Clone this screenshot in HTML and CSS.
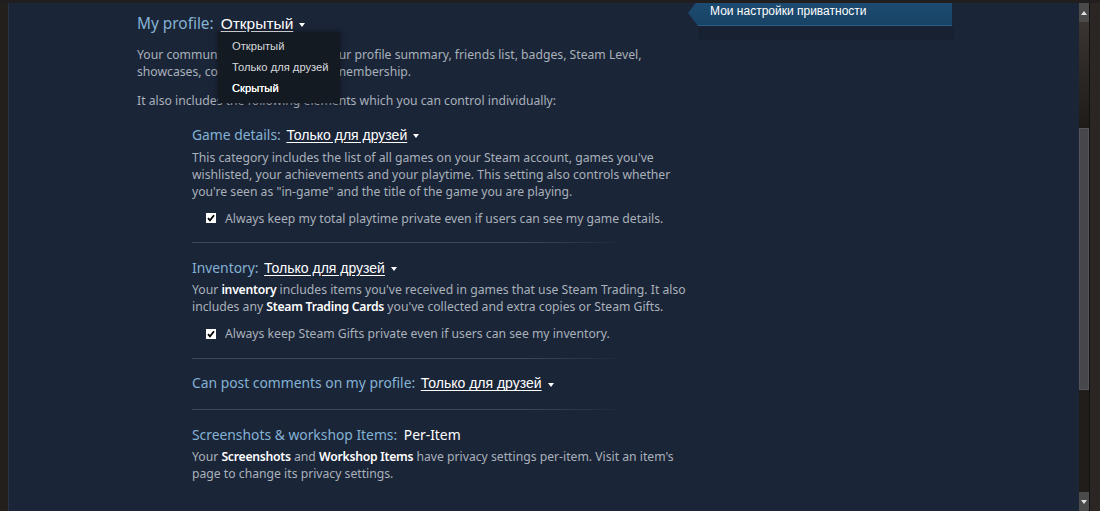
FILE: index.html
```html
<!DOCTYPE html>
<html lang="en">
<head>
<meta charset="utf-8">
<link rel="stylesheet" href="styles.css">
<title>Privacy</title>
</head>
<body>
<div class="window">
  <div class="edge-left"></div>
  <div class="main">
    <div class="content">
      <div class="top">
        <div class="heading top-heading">My profile: <span class="choice">Открытый</span><span class="caret"></span></div>
        <div class="menu">
          <div class="menu-item">Открытый</div>
          <div class="menu-item">Только для друзей</div>
          <div class="menu-item active">Скрытый</div>
        </div>
        <p class="desc top-desc">Your community profile includes your profile summary, friends list, badges, Steam Level, showcases, comments, and group membership.</p>
        <p class="desc also">It also includes the following elements which you can control individually:</p>
      </div>
      <div class="sections">
        <div class="section">
          <div class="heading">Game details: <span class="choice">Только для друзей</span><span class="caret"></span></div>
          <p class="desc">This category includes the list of all games on your Steam account, games you've wishlisted, your achievements and your playtime. This setting also controls whether you're seen as "in-game" and the title of the game you are playing.</p>
          <label class="check"><span class="box"><svg width="8" height="8" viewBox="0 0 8 8"><path d="M1 4.2 L3 6.3 L7 1.3" fill="none" stroke="#000" stroke-width="1.8"/></svg></span><span>Always keep my total playtime private even if users can see my game details.</span></label>
        </div>
        <div class="section">
          <div class="heading">Inventory: <span class="choice">Только для друзей</span><span class="caret"></span></div>
          <p class="desc">Your <b>inventory</b> includes items you've received in games that use Steam Trading. It also includes any <b>Steam Trading Cards</b> you've collected and extra copies or Steam Gifts.</p>
          <label class="check"><span class="box"><svg width="8" height="8" viewBox="0 0 8 8"><path d="M1 4.2 L3 6.3 L7 1.3" fill="none" stroke="#000" stroke-width="1.8"/></svg></span><span>Always keep Steam Gifts private even if users can see my inventory.</span></label>
        </div>
        <div class="section">
          <div class="heading">Can post comments on my profile: <span class="choice">Только для друзей</span><span class="caret"></span></div>
        </div>
        <div class="section last">
          <div class="heading">Screenshots &amp; workshop Items: <span class="plain">Per-Item</span></div>
          <p class="desc">Your <b>Screenshots</b> and <b>Workshop Items</b> have privacy settings per-item. Visit an item's page to change its privacy settings.</p>
        </div>
      </div>
    </div>
    <div class="side">
      <div class="tab">Мои настройки приватности</div>
      <div class="tab-shadow"></div>
    </div>
  </div>
  <div class="scrollbar">
    <div class="sb-btn"><span class="sb-up"></span></div>
    <div class="sb-track-top"></div>
    <div class="sb-thumb"></div>
    <div class="sb-track-bottom"></div>
    <div class="sb-btn"><span class="sb-down"></span></div>
  </div>
  <div class="edge-right"></div>
</div>
</body>
</html>
```
FILE: styles.css
```css
html, body {
  margin: 0;
  padding: 0;
  background: #221e1d;
}
.window {
  display: flex;
  width: 1100px;
  height: 511px;
  overflow: hidden;
  border-top: 3px solid #211e1f;
  box-sizing: border-box;
}
.edge-left {
  width: 8px;
  background: #231f1d;
  border-right: 1px solid #2b3446;
}
.main {
  flex: 1;
  display: flex;
  background: #1b2538;
  font-family: "Noto Sans", "Open Sans", sans-serif;
  color: #a9b1ba;
}
.content {
  width: 551px;
  margin-left: 128px;
  padding-top: 11px;
}
.top {
  position: relative;
}
.heading {
  font-size: 13.85px;
  line-height: 20px;
  color: #84b2d4;
  white-space: nowrap;
}
.top-heading {
  font-size: 15.4px;
}
.choice {
  font-family: "Liberation Sans", Arial, sans-serif;
  color: #ffffff;
  text-decoration: underline;
  text-underline-offset: 2px;
  font-size: 14px;
  margin-left: 2px;
}
.top-heading .choice {
  font-size: 15.5px;
  margin-left: 3px;
}
.plain {
  color: #ffffff;
  margin-left: 3px;
}
.caret {
  display: inline-block;
  width: 0;
  height: 0;
  border-left: 3px solid transparent;
  border-right: 3px solid transparent;
  border-top: 4px solid #ffffff;
  margin-left: 6px;
  vertical-align: middle;
}
.desc {
  margin: 0;
  font-size: 12.2px;
  line-height: 17px;
}
.desc b {
  color: #ffffff;
  font-weight: 600;
  letter-spacing: -0.25px;
}
.top-desc {
  margin-top: 12px;
}
.also {
  margin-top: 12px;
}
.menu {
  position: absolute;
  left: 81px;
  top: 18px;
  width: 108px;
  padding: 4px 0 4px 14px;
  background: #141a22;
  box-shadow: 0 0 6px rgba(0,0,0,0.5);
  font-family: "Liberation Sans", Arial, sans-serif;
  font-size: 11.2px;
  z-index: 2;
}
.menu-item {
  line-height: 21px;
  color: #d6d9dd;
}
.menu-item.active {
  color: #ffffff;
  text-shadow: 0 0 0.4px #fff;
}
.sections {
  margin-left: 55px;
  margin-top: 1.5px;
}
.section {
  padding: 14.6px 0 16.6px;
  background: linear-gradient(to right, #3b475a 0, #3b475a 330px, rgba(59,71,90,0.4) 400px, rgba(59,71,90,0) 430px) no-repeat left bottom / 100% 1px;
}
.section .heading + .desc {
  margin-top: 3.5px;
}
.section.last {
  background: none;
}
.check {
  display: flex;
  align-items: center;
  margin-top: 10px;
  margin-left: 14px;
  font-size: 12.2px;
  line-height: 17px;
}
.box {
  width: 10px;
  height: 10px;
  background: #ffffff;
  margin-right: 9px;
  display: flex;
  align-items: center;
  justify-content: center;
}
.side {
  position: relative;
  width: 264px;
}
.tab {
  height: 26px;
  margin-top: -3px;
  padding: 1px 0 0 22px;
  box-sizing: border-box;
  background: linear-gradient(#1d4c72, #184366);
  border-bottom: 1px solid #2a5c85;
  clip-path: polygon(10px 0, 100% 0, 100% 100%, 10px 100%, 0 13px);
  color: #ffffff;
  font-family: "Liberation Sans", Arial, sans-serif;
  font-size: 12px;
  line-height: 20px;
}
.tab-shadow {
  margin-left: 10px;
  margin-right: -2px;
  height: 14px;
  background: #172131;
}
.scrollbar {
  width: 10px;
  display: flex;
  flex-direction: column;
  background: #2a2523;
}
.sb-btn {
  height: 19px;
  background: #4b4a4b;
  display: flex;
  align-items: center;
  justify-content: center;
}
.sb-up {
  border-left: 3px solid transparent;
  border-right: 3px solid transparent;
  border-bottom: 4px solid #e0e0e0;
}
.sb-down {
  border-left: 3px solid transparent;
  border-right: 3px solid transparent;
  border-top: 4px solid #e0e0e0;
}
.sb-track-top {
  height: 106px;
  background: linear-gradient(#3a3431, #1e1b19);
}
.sb-thumb {
  height: 262px;
  background: #47474b;
  border: 1px solid #55555a;
  box-sizing: border-box;
}
.sb-track-bottom {
  flex: 1;
  background: #211d1b;
}
.edge-right {
  width: 10px;
  background: #2b2624;
  border-left: 1px solid #111;
}
```
